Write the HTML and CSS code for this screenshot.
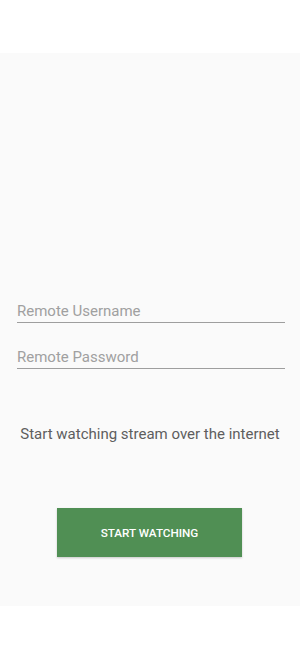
FILE: index.html
```html
<!DOCTYPE html>
<html lang="en">
<head>
<meta charset="utf-8">
<title>Remote Watch</title>
<link rel="stylesheet" href="styles.css">
</head>
<body>
<div class="top"></div>
<main class="screen">
  <div class="field"><span class="placeholder">Remote Username</span></div>
  <div class="field field-second"><span class="placeholder">Remote Password</span></div>
  <p class="message">Start watching stream over the internet</p>
  <div class="actions"><button class="btn">START WATCHING</button></div>
</main>
<div class="bottom"></div>
</body>
</html>
```
FILE: styles.css
```css
html, body {
  margin: 0;
  padding: 0;
  background: #ffffff;
  font-family: Roboto, "Noto Sans", sans-serif;
}
.top {
  height: 53px;
  background: #ffffff;
}
.screen {
  height: 553px;
  box-sizing: border-box;
  background: #fafafa;
  padding: 247px 15px 0 17px;
  display: flex;
  flex-direction: column;
}
.field {
  height: 22px;
  border-bottom: 1px solid #9e9e9e;
  box-sizing: content-box;
}
.field-second {
  margin-top: 23px;
}
.placeholder {
  display: block;
  padding-top: 1px;
  font-size: 15px;
  line-height: 20px;
  color: #a0a0a0;
}
.message {
  margin: 55px -15px 0 -17px;
  text-align: center;
  font-size: 15px;
  line-height: 20px;
  color: #5e5e5e;
}
.actions {
  margin-top: 64px;
  display: flex;
  padding-left: 40px;
}
.btn {
  width: 185px;
  height: 49px;
  border: none;
  background: #508f54;
  color: #ffffff;
  font-family: Roboto, sans-serif;
  font-weight: 500;
  font-size: 11.7px;
  letter-spacing: 0;
  box-shadow: 0 1px 2px rgba(0,0,0,0.2);
}
.bottom {
  height: 61px;
}
```
